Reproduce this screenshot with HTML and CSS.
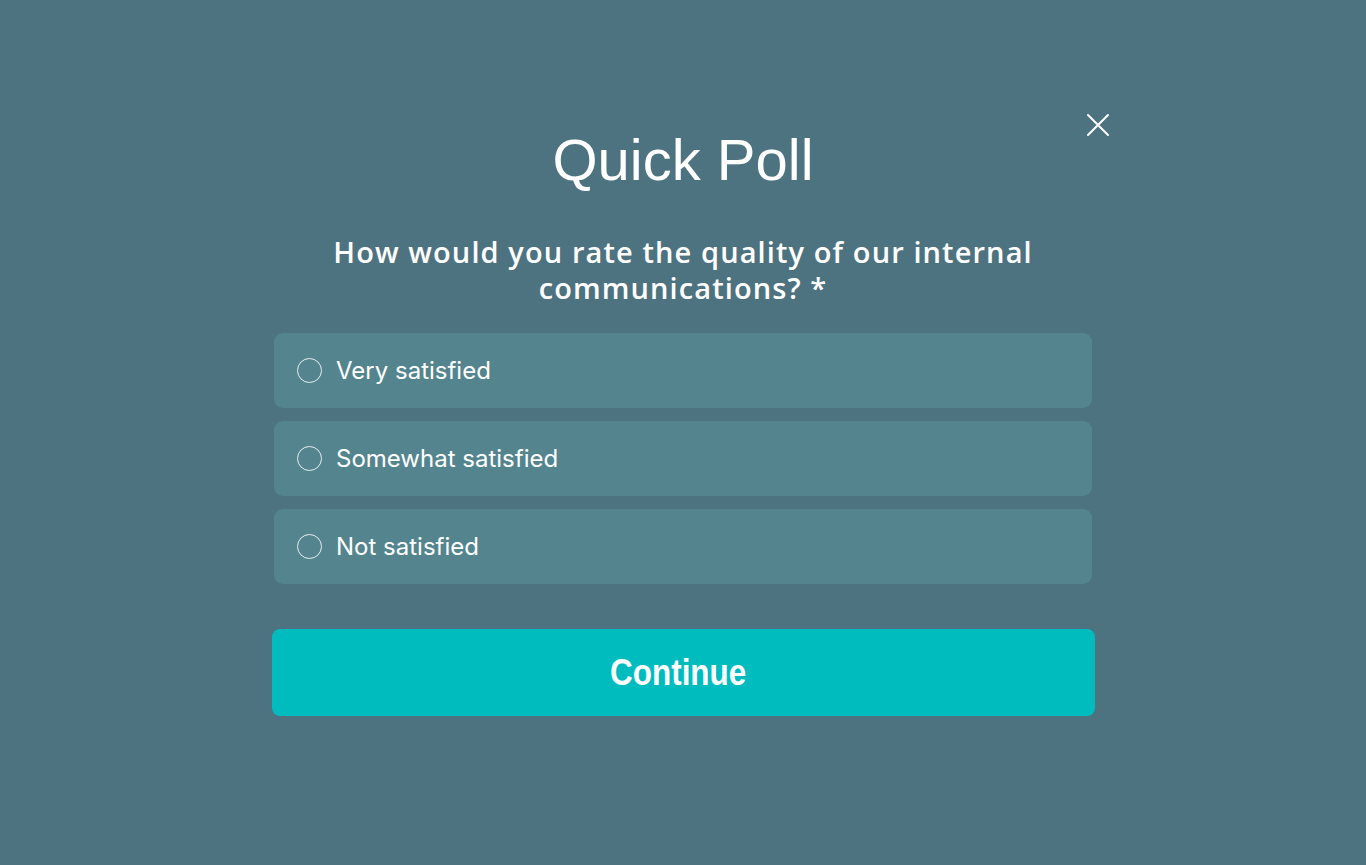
FILE: index.html
```html
<!DOCTYPE html>
<html lang="en">
<head>
    <meta charset="UTF-8">
    <meta name="viewport" content="width=device-width, initial-scale=1.0">
    <title>Quick Poll</title>
    <link rel="stylesheet" href="styles.css">
</head>
<body>
    <div class="poll">
        <button class="close" aria-label="Close">
            <svg width="24" height="24" viewBox="0 0 24 24" fill="none" stroke="#fff" stroke-width="2" stroke-linecap="round">
                <path d="M2 2 L22 22 M22 2 L2 22"/>
            </svg>
        </button>

        <h1>Quick Poll</h1>

        <p class="question">How would you rate the quality of our internal communications? *</p>

        <div class="options">
            <label class="option">
                <input type="radio" name="rating" value="very">
                <span class="radio"></span>
                <span>Very satisfied</span>
            </label>
            <label class="option">
                <input type="radio" name="rating" value="somewhat">
                <span class="radio"></span>
                <span>Somewhat satisfied</span>
            </label>
            <label class="option">
                <input type="radio" name="rating" value="not">
                <span class="radio"></span>
                <span>Not satisfied</span>
            </label>
        </div>

        <button class="continue"><span>Continue</span></button>
    </div>
</body>
</html>
```

FILE: styles.css
```css
body {
    margin: 0;
    min-height: 865px;
    background-color: #4e7380;
    font-family: "Liberation Sans", Arial, sans-serif;
    color: white;
}

.poll {
    position: relative;
    width: 818px;
    margin: 0 auto;
    padding-top: 125px;
}

.close {
    position: absolute;
    top: 113px;
    right: -18px;
    width: 24px;
    height: 24px;
    padding: 0;
    border: none;
    background: none;
    cursor: pointer;
}

.close svg {
    display: block;
}

h1 {
    margin: 0;
    text-align: center;
    font-size: 58px;
    font-weight: normal;
    line-height: 70px;
}

.question {
    margin: 39px 20px 27px;
    text-align: center;
    font-family: "Open Sans", sans-serif;
    font-weight: 600;
    font-size: 29px;
    letter-spacing: 1.1px;
    line-height: 36px;
}

.options {
    display: flex;
    flex-direction: column;
    gap: 13px;
}

.option {
    display: flex;
    align-items: center;
    gap: 14px;
    height: 75px;
    padding: 0 23px;
    background: #54858f;
    border-radius: 9px;
    font-family: Inter, sans-serif;
    font-weight: 400;
    font-size: 24px;
    cursor: pointer;
}

.option input {
    display: none;
}

.radio {
    width: 23px;
    height: 23px;
    border: 1.5px solid #e6eef0;
    border-radius: 50%;
}

.continue {
    display: block;
    width: 823px;
    height: 87px;
    margin: 45px -2px 0;
    padding: 0 10px 0 0;
    border: none;
    border-radius: 8px;
    background: #00bcbf;
    color: white;
    font-family: "Liberation Sans", Arial, sans-serif;
    font-weight: bold;
    font-size: 37px;
    cursor: pointer;
}

.continue span {
    display: inline-block;
    transform: scaleX(0.85);
}
```
